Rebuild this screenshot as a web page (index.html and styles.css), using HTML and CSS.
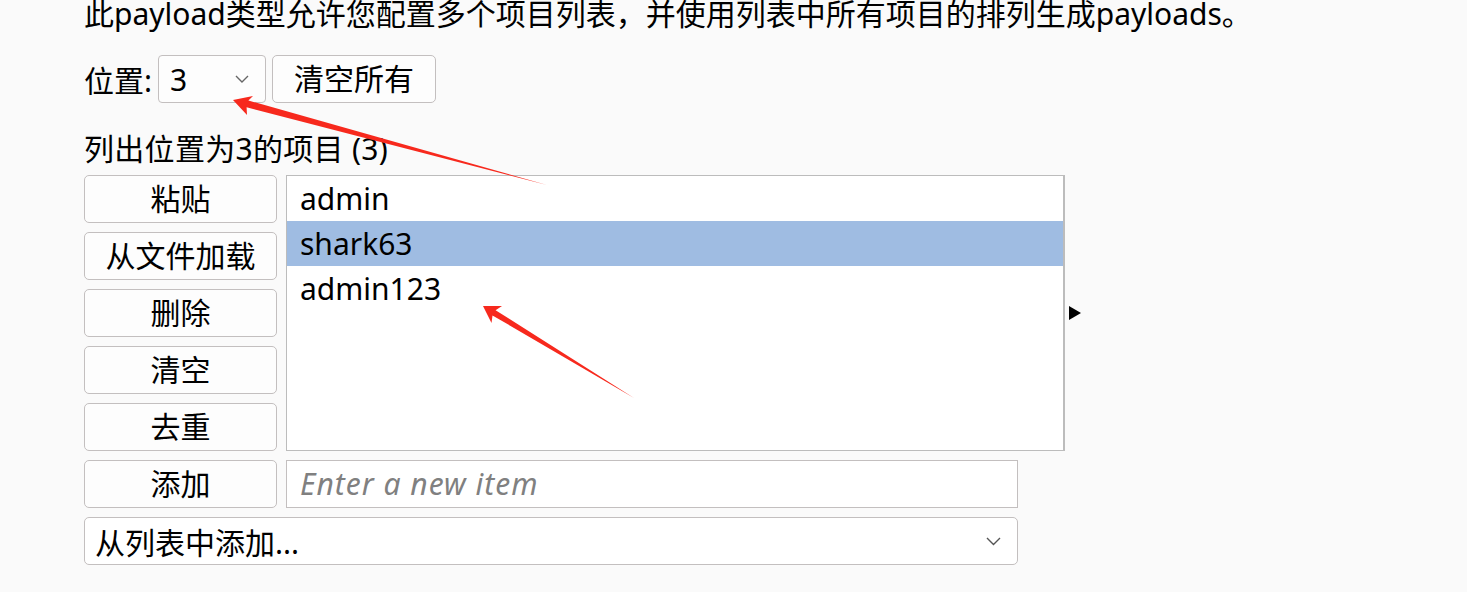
FILE: index.html
```html
<!DOCTYPE html>
<html lang="zh-CN">
<head>
<meta charset="utf-8">
<title>Payload 设置</title>
<link rel="stylesheet" href="styles.css">
</head>
<body>
<div class="page">
  <p class="desc">此payload类型允许您配置多个项目列表，并使用列表中所有项目的排列生成payloads。</p>
  <div class="posrow">
    <span class="poslabel">位置:</span>
    <div class="select">
      <span class="selval">3</span>
      <svg class="chev" width="14" height="8" viewBox="0 0 14 8"><path d="M1 1 L7 7 L13 1" fill="none" stroke="#666" stroke-width="1.4"/></svg>
    </div>
    <button class="btn clearall">清空所有</button>
  </div>
  <div class="listlabel">列出位置为3的项目 (3)</div>
  <div class="grid">
    <button class="btn b1">粘贴</button>
    <button class="btn b2">从文件加载</button>
    <button class="btn b3">删除</button>
    <button class="btn b4">清空</button>
    <button class="btn b5">去重</button>
    <div class="list">
      <div class="item">admin</div>
      <div class="item sel">shark63</div>
      <div class="item">admin123</div>
    </div>
    <div class="expander"></div>
    <button class="btn b6">添加</button>
    <div class="input">Enter a new item</div>
    <div class="combo">
      <span>从列表中添加...</span>
      <svg class="chev2" width="15" height="9" viewBox="0 0 15 9"><path d="M1 1 L7.5 7.5 L14 1" fill="none" stroke="#555" stroke-width="1.4"/></svg>
    </div>
  </div>
</div>
<svg class="arrows" width="1467" height="592" viewBox="0 0 1467 592">
  <polygon fill="#f7291d" points="233,100 253,96 248.4,100.5 547,185 246.6,107.3 247,115"/>
  <polygon fill="#f7291d" points="483,306 502,306 495.6,310.2 634,398 492.5,315.4 491.5,323"/>
</svg>
</body>
</html>
```
FILE: styles.css
```css
html, body {
  margin: 0;
  padding: 0;
  background: #fafafa;
}
body {
  font-family: "Noto Sans", "Noto Sans CJK SC", sans-serif;
  font-size: 30px;
  color: #000;
  width: 1467px;
  height: 592px;
  overflow: hidden;
  position: relative;
}
.page {
  padding-left: 84px;
}
.desc {
  margin: 0 0 27px 0;
  height: 28px;
  line-height: 28px;
  white-space: nowrap;
}
.posrow {
  display: flex;
  align-items: center;
  height: 48px;
}
.poslabel {
  width: 74px;
}
.select {
  width: 108px;
  height: 48px;
  box-sizing: border-box;
  border: 1px solid #c3bfbf;
  border-radius: 4px;
  background: #fdfdfd;
  display: flex;
  align-items: center;
  justify-content: space-between;
  padding: 0 16px 0 11px;
}
.btn {
  font-family: inherit;
  font-size: 30px;
  color: #000;
  height: 48px;
  box-sizing: border-box;
  border: 1px solid #c3bfbf;
  border-radius: 5px;
  background: #fdfdfd;
  padding: 0;
  margin: 0;
  line-height: 1;
}
.clearall {
  width: 164px;
  margin-left: 6px;
}
.listlabel {
  padding-top: 26px;
  line-height: 40px;
  height: 40px;
  margin-bottom: 6px;
  letter-spacing: 0.3px;
}
.grid {
  display: grid;
  grid-template-columns: 193px 9px 732px 47px 20px;
  grid-template-rows: repeat(7, 48px);
  row-gap: 9px;
}
.b1 { grid-column: 1; grid-row: 1; }
.b2 { grid-column: 1; grid-row: 2; }
.b3 { grid-column: 1; grid-row: 3; }
.b4 { grid-column: 1; grid-row: 4; }
.b5 { grid-column: 1; grid-row: 5; }
.b6 { grid-column: 1; grid-row: 6; }
.list {
  grid-column: 3 / 5;
  grid-row: 1 / 6;
  background: #fff;
  border: 1px solid #bcbcbc;
  border-right-width: 2px;
}
.item {
  height: 45px;
  line-height: 45px;
  padding-left: 13px;
}
.item.sel {
  background: #9fbce2;
}
.expander {
  grid-column: 5;
  grid-row: 1 / 6;
  align-self: center;
  margin-left: 4px;
  width: 0;
  height: 0;
  border-top: 7.5px solid transparent;
  border-bottom: 7.5px solid transparent;
  border-left: 12px solid #000;
}
.input {
  grid-column: 3;
  grid-row: 6;
  background: #fff;
  border: 1.5px solid #c3bfbf;
  box-sizing: border-box;
  line-height: 45px;
  padding-left: 13px;
  font-style: italic;
  color: #808080;
  letter-spacing: 1px;
}
.combo {
  grid-column: 1 / 4;
  grid-row: 7;
  background: #fff;
  border: 1px solid #c3bfbf;
  border-radius: 5px;
  box-sizing: border-box;
  display: flex;
  align-items: center;
  justify-content: space-between;
  padding: 0 16px 0 10px;
}
.arrows {
  position: absolute;
  left: 0;
  top: 0;
  pointer-events: none;
}
```
